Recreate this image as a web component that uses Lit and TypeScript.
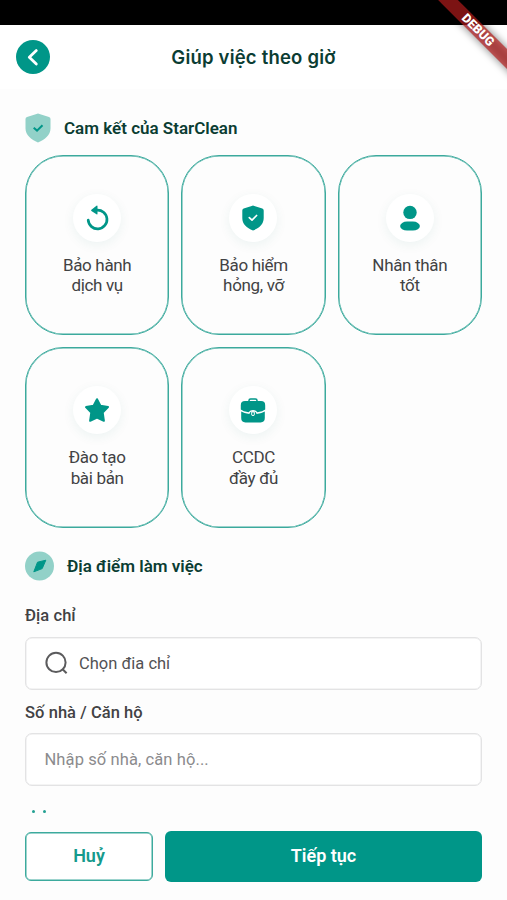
import { LitElement, html, css, svg } from "lit";
import { customElement, property } from "lit/decorators.js";

const icons = {
  redo: svg`<path d="M5.2 16.2A9.4 9.4 0 1 0 13.6 6.1" fill="none" stroke="currentColor" stroke-width="2.7" stroke-linecap="round"/><path d="M8.4 5.8L13.5 1.7Q14.5 1.2 14.5 2.3V9.8Q14.5 10.9 13.5 10.3L8.4 6.9Q7.7 6.3 8.4 5.8Z" fill="currentColor"/>`,
  shield: svg`<path d="M14 1.6Q14.7 1.6 15.3 1.9L23.3 4.6Q24.7 5.1 24.7 6.6V14C24.7 20 20.4 24 14 26.5C7.6 24 3.3 20 3.3 14V6.6Q3.3 5.1 4.7 4.6L12.7 1.9Q13.3 1.6 14 1.6Z" fill="currentColor"/><path d="M10.3 13.6L13 16.1L17.6 11.5" fill="none" stroke="#fff" stroke-width="1.7" stroke-linecap="round" stroke-linejoin="round"/>`,
  person: svg`<circle cx="14" cy="8.4" r="6.7" fill="currentColor"/><rect x="4.1" y="17.6" width="19.8" height="9" rx="7" ry="4.5" fill="currentColor"/>`,
  star: svg`<path d="M14 3.2L17.4 9.8L25 11.1L19.7 16.5L20.9 24.8L14 21.5L7.1 24.8L8.3 16.5L3 11.1L10.6 9.8Z" fill="currentColor" stroke="currentColor" stroke-width="2" stroke-linejoin="round"/>`,
  bag: svg`<path d="M10 5.7V4.6Q10 3 11.6 3H16.4Q18 3 18 4.6V5.7" fill="none" stroke="currentColor" stroke-width="1.5"/><path d="M6 5H22Q26.2 5 26.2 9.2V13.4Q23.8 15.5 18.4 16.3Q16.7 14 14 14Q11.3 14 9.6 16.3Q4.2 15.5 1.8 13.4V9.2Q1.8 5 6 5Z" fill="currentColor"/><path d="M2.2 15.6Q5 17.4 10.3 18Q11.2 15.5 12.4 15.5V18.2Q12.4 19.8 14 19.8Q15.6 19.8 15.6 18.2V15.5Q16.8 15.5 17.7 18Q23 17.4 25.8 15.6V22Q25.8 26.4 21.6 26.4H6.4Q2.2 26.4 2.2 22Z" fill="currentColor"/><path d="M12.7 17.1Q12.7 15.7 14 15.7Q15.3 15.7 15.3 17.1V18.2Q15.3 19.6 14 19.6Q12.7 19.6 12.7 18.2Z" fill="currentColor" stroke="#fff" stroke-width=".9"/>`,
};

@customElement("promise-card")
class PromiseCard extends LitElement {
  @property() icon: keyof typeof icons = "redo";
  static styles = css`
    :host {
      box-sizing: border-box;
      display: flex;
      flex-direction: column;
      align-items: center;
      height: 180.5px;
      padding-top: 38px;
      border: 1px solid #3caa9d;
      border-radius: 38px;
      background: #fdfdfd;
      box-shadow: inset 0 0 0 0.5px #3caa9d;
    }
    .disc {
      display: grid;
      place-items: center;
      width: 48px;
      height: 48px;
      border-radius: 50%;
      background: #fff;
      color: #009688;
      box-shadow: 0 3px 12px rgba(0, 110, 100, 0.07);
    }
    .text {
      margin-top: 13px;
      color: #424244;
      text-align: center;
      font-size: 17px;
      letter-spacing: -0.33px;
      line-height: 20.9px;
    }
  `;
  render() {
    return html`<div class="disc"><svg width="28" height="28" viewBox="0 0 28 28">${icons[this.icon]}</svg></div>
      <div class="text"><slot></slot></div>`;
  }
}

@customElement("debug-ribbon")
class DebugRibbon extends LitElement {
  static styles = css`
    :host {
      position: absolute;
      top: 0;
      right: 0;
      width: 100px;
      height: 100px;
      overflow: hidden;
      pointer-events: none;
    }
    .band, .shade {
      position: absolute;
      left: -29.5px;
      top: 22.5px;
      width: 200px;
      height: 14px;
      transform: rotate(45deg);
    }
    .shade {
      background: rgba(0, 0, 0, 0.5);
      filter: blur(4px);
    }
    .band {
      background: rgba(183, 28, 28, 0.68);
      color: #fff;
      text-align: center;
      font: 900 12.5px/14px Roboto, sans-serif;
    }
  `;
  render() {
    return html`<div class="shade"></div><div class="band">DEBUG</div>`;
  }
}

@customElement("app-root")
class AppRoot extends LitElement {
  static styles = css`
    :host {
      position: relative;
      display: flex;
      flex-direction: column;
      box-sizing: border-box;
      width: 100%;
      height: 900px;
      overflow: hidden;
      background: #fdfdfd;
      color: #424244;
      font-family: Roboto, "Noto Sans", sans-serif;
    }
    svg { display: block; flex: none; }
    .status { height: 25px; background: #000; flex: none; }
    .bar {
      display: grid;
      grid-template-columns: 34px 1fr 34px;
      align-items: center;
      flex: none;
      height: 64px;
      padding: 0 16px;
      background: #fff;
    }
    .title {
      text-align: center;
      color: #0b3d33;
      font: 600 18.5px/24px Inter, sans-serif;
      letter-spacing: 0.2px;
    }
    .body {
      flex: 1;
      min-height: 0;
      overflow: hidden;
      padding: 23.5px 25px 0;
    }
    .head {
      display: flex;
      align-items: center;
      gap: 13px;
      height: 30px;
      color: #0b3d33;
      font-size: 17px;
      font-weight: 600;
    }
    .cards {
      display: grid;
      grid-template-columns: repeat(3, 1fr);
      gap: 12px;
      margin: 12px 0 23.5px;
    }
    .label {
      height: 20px;
      line-height: 20px;
      margin: 25px 0 10.5px;
      font-size: 16.5px;
      font-weight: 500;
      letter-spacing: 0.06px;
    }
    .field + .label { margin: 13.5px 0 9.5px; }
    .field {
      box-sizing: border-box;
      display: flex;
      align-items: center;
      gap: 10.5px;
      height: 53px;
      padding-left: 18.5px;
      border: 1px solid #e3e3e4;
      border-radius: 7px;
      background: #fff;
      box-shadow: inset 0 0 0 0.5px #e9e9ea;
      font-size: 16.5px;
      color: #525254;
    }
    .hint { color: #8b8b8d; letter-spacing: 0.1px; }
    .more {
      display: flex;
      gap: 8px;
      margin: 24px 0 0 6.5px;
    }
    .dot { width: 3px; height: 3px; border-radius: 50%; background: #23a092; }
    .actions {
      display: grid;
      grid-template-columns: 128px 1fr;
      align-items: center;
      gap: 12px;
      flex: none;
      height: 51px;
      margin: 0 25px 18.5px;
    }
    button {
      box-sizing: border-box;
      height: 51px;
      padding: 0 0 2px;
      border: 0;
      border-radius: 6px;
      background: #009688;
      color: #fff;
      font: 600 18px Roboto, sans-serif;
    }
    .cancel {
      height: 49px;
      border: 1px solid #3caa9d;
      box-shadow: inset 0 0 0 0.5px #3caa9d;
      background: #fff;
      color: #159a8c;
    }
  `;
  render() {
    return html`
      <div class="status"></div>
      <header class="bar">
        <svg width="34" height="34" viewBox="0 0 34 34"><circle cx="17" cy="17" r="17" fill="#009688"/><path d="M20.3 10.6L13.3 17.2L20.3 24" fill="none" stroke="#fff" stroke-width="2.8" stroke-linecap="round" stroke-linejoin="round"/></svg>
        <div class="title">Giúp việc theo giờ</div>
      </header>
      <main class="body">
        <div class="head">
          <svg width="26" height="30" viewBox="0 0 26 30"><path d="M13 .6Q13.7.6 14.5.9L24 4Q25.5 4.6 25.5 6V15.6C25.5 22 20 26.8 13 29.6C6 26.8.5 22 .5 15.6V6Q.5 4.6 2 4L11.5.9Q12.3.6 13 .6Z" fill="#92d1c8"/><path d="M8.7 14.8L12 17.6L17.5 12.2" fill="none" stroke="#009688" stroke-width="2"/></svg>
          <span>Cam kết của StarClean</span>
        </div>
        <div class="cards">
          <promise-card icon="redo">Bảo hành<br>dịch vụ</promise-card>
          <promise-card icon="shield">Bảo hiểm<br>hỏng, vỡ</promise-card>
          <promise-card icon="person">Nhân thân<br>tốt</promise-card>
          <promise-card icon="star">Đào tạo<br>bài bản</promise-card>
          <promise-card icon="bag">CCDC<br>đầy đủ</promise-card>
        </div>
        <div class="head">
          <svg width="29" height="30" viewBox="0 0 29 30"><circle cx="14.5" cy="15" r="14.5" fill="#92d1c8"/><path d="M12.5 11.2L20.8 9.2L17.2 17.6L8.8 20.8Z" fill="#009688" stroke="#009688" stroke-linejoin="round"/></svg>
          <span>Địa điểm làm việc</span>
        </div>
        <div class="label">Địa chỉ</div>
        <div class="field">
          <svg width="24" height="24" viewBox="0 0 24 24" fill="none" stroke="#5b5b5d" stroke-width="2"><circle cx="11" cy="11.4" r="9.6"/><path d="M17.6 18.2L21.6 22.2"/></svg>
          <span>Chọn đia chỉ</span>
        </div>
        <div class="label">Số nhà / Căn hộ</div>
        <div class="field hint"><span>Nhập số nhà, căn hộ...</span></div>
        <div class="more"><span class="dot"></span><span class="dot"></span></div>
      </main>
      <footer class="actions">
        <button class="cancel">Huỷ</button>
        <button>Tiếp tục</button>
      </footer>
      <debug-ribbon></debug-ribbon>
    `;
  }
}
